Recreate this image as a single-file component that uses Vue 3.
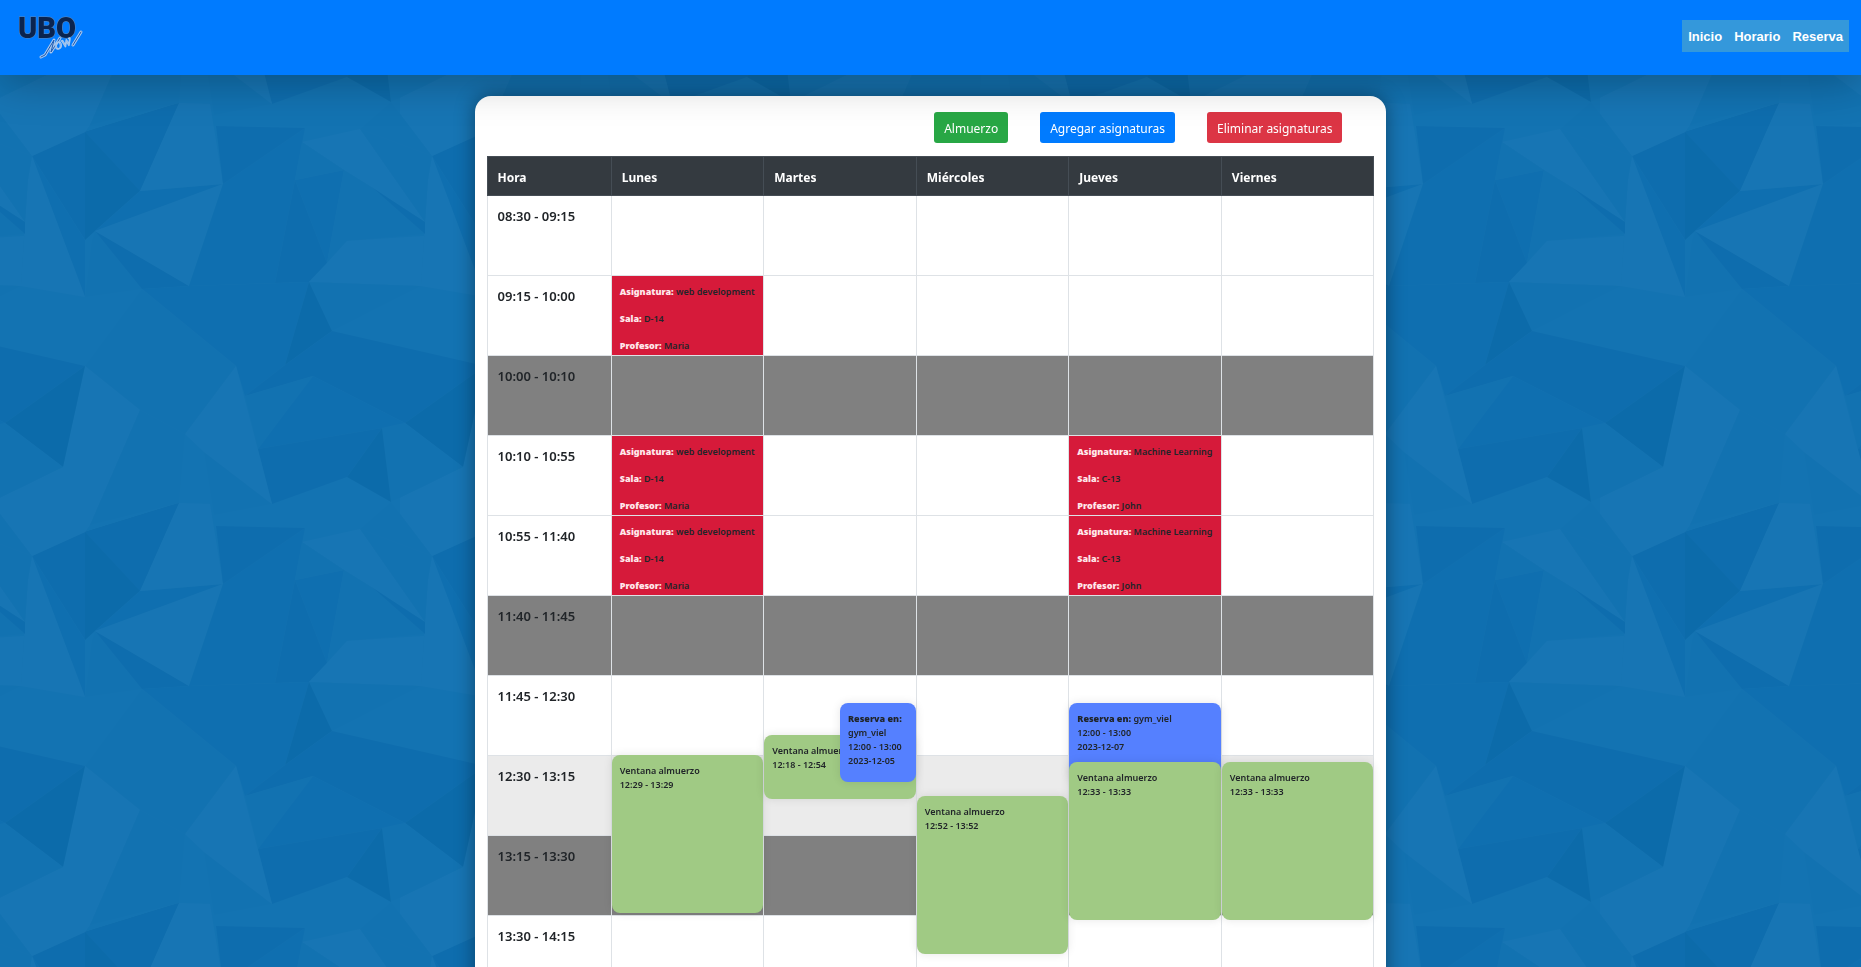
<script setup>
const facets = [
  ['d', '32,156 85,132 85,240'],
  ['c', '32,156 85,240 85,297'],
  ['e', '85,132 179,103 140,191 95,231 85,240'],
  ['d', '85,132 179,103 140,191'],
  ['c', '140,191 223,184 95,231'],
  ['b', '85,297 92,240 95,231 142,289'],
  ['d', '95,231 189,286 142,289'],
  ['a', '95,231 223,184 189,286'],
  ['a', '140,191 179,103 210,104 223,184'],
  ['c', '223,184 305,128 295,180 275,283 189,286'],
  ['d', '216,126 305,128 223,184'],
  ['c', '295,180 344,170 327,263'],
  ['d', '295,180 327,263 309,282 275,283'],
  ['a', '302,142 360,129 425,222 373,188 344,170'],
  ['b', '302,142 344,170 295,180'],
  ['b', '360,129 432,156 428,180 425,222'],
  ['b', '344,170 373,188 425,234 347,241 327,263'],
  ['d', '373,188 425,222 425,234'],
  ['a', '309,282 327,263 347,241 424,236 421,286'],
  ['b', '309,282 421,286 332,331'],
  ['c', '142,289 189,286 309,282 285,365 245,396 236,366'],
  ['e', '309,282 332,331 285,365'],
  ['d', '332,331 485,366 405,423 313,376 245,396 285,365'],
  ['e', '485,366 463,467 405,423'],
  ['b', '405,423 463,467 391,502 382,428'],
  ['b', '245,396 313,376 258,449'],
  ['c', '258,449 313,376 405,423 382,428'],
  ['d', '258,449 382,428 347,477 272,504'],
  ['e', '382,428 391,502 347,477'],
  ['b', '204,452 272,504 214,515'],
  ['a', '236,366 272,504 204,452 185,434'],
  ['b', '142,289 236,366 185,434 140,410 85,366'],
  ['a', '85,366 140,410 90,525 85,532 32,556 -9,502 63,467'],
  ['b', '140,410 185,434 179,503 90,525'],
  ['a', '32,156 85,297 21,286 28,180'],
  ['b', '360,529 391,502 432,556'],
]
const shades = { a: '#1775b4', b: '#1272b1', c: '#0f6fb0', d: '#0e6dae', e: '#0c6baa' }
const offsets = [[0, 0], [-400, 0], [0, -400], [-400, -400], [400, 0]]

const links = ['Inicio', 'Horario', 'Reserva']
const days = ['Lunes', 'Martes', 'Miércoles', 'Jueves', 'Viernes']

const web = { name: 'web development', room: 'D-14', teacher: 'Maria' }
const ml = { name: 'Machine Learning', room: 'C-13', teacher: 'John' }

const rows = [
  { time: ['08:30', '09:15'] },
  { time: ['09:15', '10:00'], classes: { Lunes: web } },
  { time: ['10:00', '10:10'], kind: 'break' },
  { time: ['10:10', '10:55'], classes: { Lunes: web, Jueves: ml } },
  { time: ['10:55', '11:40'], classes: { Lunes: web, Jueves: ml } },
  { time: ['11:40', '11:45'], kind: 'break' },
  { time: ['11:45', '12:30'] },
  { time: ['12:30', '13:15'], kind: 'active' },
  { time: ['13:15', '13:30'], kind: 'break' },
  { time: ['13:30', '14:15'] },
]

const events = [
  { day: 'Lunes', type: 'lunch', from: '12:29', to: '13:29', height: 158 },
  { day: 'Martes', type: 'lunch', from: '12:18', to: '12:54', height: 64 },
  { day: 'Martes', type: 'booking', from: '12:00', to: '13:00', height: 79, date: '2023-12-05', half: true },
  { day: 'Miércoles', type: 'lunch', from: '12:52', to: '13:52', height: 158 },
  { day: 'Jueves', type: 'booking', from: '12:00', to: '13:00', height: 79, date: '2023-12-07' },
  { day: 'Jueves', type: 'lunch', from: '12:33', to: '13:33', height: 158 },
  { day: 'Viernes', type: 'lunch', from: '12:33', to: '13:33', height: 158 },
]

const minutes = (t) => Number(t.slice(0, 2)) * 60 + Number(t.slice(3))

function eventsFor(row, day) {
  const start = minutes(row.time[0])
  const end = minutes(row.time[1])
  return events
    .filter((e) => e.day === day && minutes(e.from) >= start && minutes(e.from) < end)
    .map((e) => ({ ...e, top: Math.ceil(((minutes(e.from) - start) / (end - start)) * 80) }))
}
</script>

<template>
  <div class="page">
    <svg class="backdrop" aria-hidden="true">
      <defs>
        <pattern id="facets" width="400" height="400" patternUnits="userSpaceOnUse">
          <rect width="400" height="400" fill="#1373b2" />
          <g v-for="(o, k) in offsets" :key="k" :transform="`translate(${o[0]} ${o[1]})`">
            <polygon v-for="(f, i) in facets" :key="i" :points="f[1]" :fill="shades[f[0]]" />
          </g>
        </pattern>
      </defs>
      <rect width="100%" height="100%" fill="url(#facets)" />
    </svg>

    <header class="topbar">
      <a class="brand" href="#" aria-label="UBO Now!">
        <svg width="76" height="50" viewBox="0 0 76 50">
          <text class="ubo" x="6" y="26">UBO</text>
          <path class="swash-edge" d="M29 45 L33 43 L42 28 L39 40 L48 26" />
          <path class="swash" d="M29 45 L33 43 L42 28 L39 40 L48 26" />
          <text class="now" x="44" y="38" transform="rotate(-20 44 38)">ow</text>
          <path class="swash-edge" d="M61 33 L69 20" />
          <path class="swash" d="M61 33 L69 20" />
        </svg>
      </a>
      <nav class="menu">
        <a v-for="l in links" :key="l" href="#">{{ l }}</a>
      </nav>
    </header>

    <main class="card">
      <div class="actions">
        <button type="button" class="btn green">Almuerzo</button>
        <button type="button" class="btn blue">Agregar asignaturas</button>
        <button type="button" class="btn red">Eliminar asignaturas</button>
      </div>
      <table class="schedule">
        <thead>
          <tr>
            <th scope="col" class="hour">Hora</th>
            <th v-for="d in days" :key="d" scope="col">{{ d }}</th>
          </tr>
        </thead>
        <tbody>
          <tr v-for="r in rows" :key="r.time[0]" :class="r.kind">
            <th scope="row">{{ r.time[0] }} - {{ r.time[1] }}</th>
            <td v-for="d in days" :key="d">
              <div class="slot">
                <div v-if="r.classes?.[d]" class="subject">
                  <p><strong>Asignatura:</strong> {{ r.classes[d].name }}</p>
                  <p><strong>Sala:</strong> {{ r.classes[d].room }}</p>
                  <p><strong>Profesor:</strong> {{ r.classes[d].teacher }}</p>
                </div>
                <div
                  v-for="(e, i) in eventsFor(r, d)"
                  :key="i"
                  class="event"
                  :class="[e.type, { half: e.half }]"
                  :style="{ top: e.top + 'px', height: e.height + 'px' }"
                >
                  <div v-if="e.type === 'lunch'">Ventana almuerzo</div>
                  <div v-else><strong>Reserva en:</strong> gym_viel</div>
                  <div>{{ e.from }} - {{ e.to }}</div>
                  <div v-if="e.date">{{ e.date }}</div>
                </div>
              </div>
            </td>
          </tr>
        </tbody>
      </table>
    </main>
  </div>
</template>

<style>
body {
  margin: 0;
  background: #1373b2;
}
</style>

<style scoped>
.page {
  position: relative;
  height: 100vh;
  overflow: auto;
  scrollbar-width: none;
  font-family: "Noto Sans", "Open Sans", sans-serif;
  font-size: 13px;
  color: #212529;
}
.backdrop {
  position: fixed;
  inset: 0;
  width: 100%;
  height: 100%;
}
.topbar {
  position: relative;
  z-index: 5;
  box-sizing: border-box;
  height: 75px;
  display: flex;
  justify-content: space-between;
  align-items: flex-start;
  padding: 12px;
  background: #007bff;
  box-shadow: 0 8px 40px rgba(0, 0, 0, 0.25);
}
.brand svg {
  display: block;
  overflow: visible;
}
.ubo {
  font: 900 29px Roboto, sans-serif;
  fill: #0a2450;
  stroke: #5f86b4;
  stroke-width: 1;
  paint-order: stroke;
}
.now {
  font: italic 15px "Liberation Serif", serif;
  fill: #3f84e8;
  stroke: #a9c8ee;
  stroke-width: 1;
}
.swash-edge,
.swash {
  fill: none;
  stroke-linecap: round;
  stroke-linejoin: round;
}
.swash-edge {
  stroke: #a9c8ee;
  stroke-width: 3;
}
.swash {
  stroke: #1b58b0;
  stroke-width: 1;
}
.menu {
  display: flex;
  gap: 12px;
  margin-top: 8px;
  padding: 1px 6px 0;
  background: #3498db;
  font: bold 13px/31px "Liberation Sans", Arial, sans-serif;
}
.menu a {
  color: #fff;
  text-decoration: none;
}
.card {
  position: relative;
  box-sizing: border-box;
  width: 49%;
  margin: 21px auto 24px;
  padding: 16px 12px 12px;
  border-radius: 16px;
  background: #fff;
  box-shadow: 0 0 20px rgba(0, 0, 0, 0.4);
}
.actions {
  display: flex;
  justify-content: flex-end;
  gap: 32px;
  padding: 0 32px 13px 0;
}
.btn {
  height: 31px;
  padding: 1px 10px 0;
  border: 0;
  border-radius: 3px;
  color: #fff;
  font: 12px "Noto Sans", "Open Sans", sans-serif;
}
.green { background: #28a745; }
.blue { background: #007bff; }
.red { background: #dc3545; }
.schedule {
  width: 100%;
  table-layout: fixed;
  border-collapse: collapse;
}
.schedule th {
  padding: 10px;
  border: 1px solid #dee2e6;
  text-align: left;
  vertical-align: top;
  font-weight: 600;
  line-height: 20px;
}
.schedule thead th {
  padding: 11px 10px 7px;
  border-color: #454d55;
  background: #343a40;
  color: #fff;
  font-size: 12px;
  font-weight: 700;
}
.schedule .hour {
  width: 14%;
  box-sizing: border-box;
}
.schedule td {
  padding: 0;
  border: 1px solid #dee2e6;
}
.break { background: #808080; }
.active { background: #ebebeb; }
.slot {
  position: relative;
  height: 79px;
}
.subject {
  box-sizing: border-box;
  height: 79px;
  padding: 9px 0 0 8px;
  display: flex;
  flex-direction: column;
  gap: 13px;
  background: #d61a3a;
  font-size: 9px;
  font-weight: 600;
  line-height: 14px;
  white-space: nowrap;
}
.subject p {
  margin: 0;
}
.subject strong {
  color: #ffe9ec;
}
.event {
  position: absolute;
  left: 0;
  right: 0;
  box-sizing: border-box;
  padding: 9px 8px;
  border-radius: 8px;
  box-shadow: 0 0 10px rgba(0, 0, 0, 0.1);
  font-size: 9px;
  font-weight: 600;
  line-height: 14px;
}
.lunch { background: #a0ca84; }
.booking { background: #5580ff; }
.half { left: 50%; }
</style>
